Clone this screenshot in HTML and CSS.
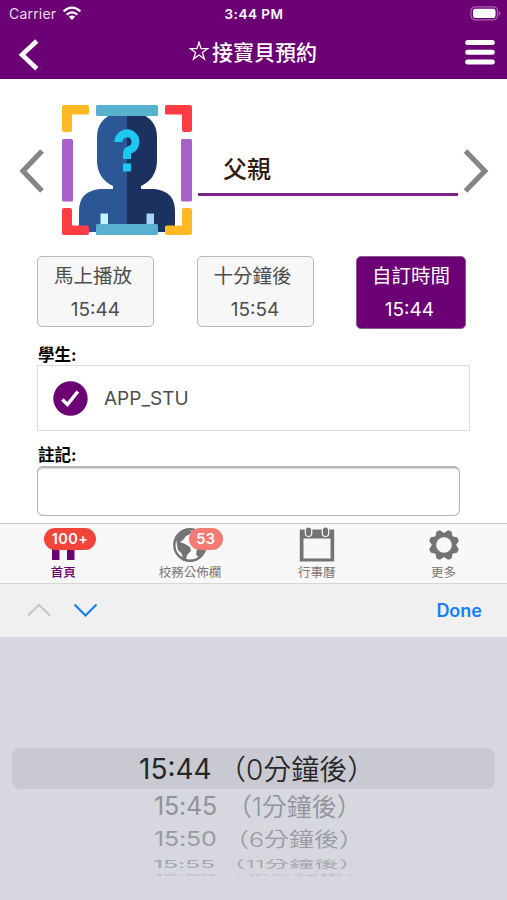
FILE: index.html
```html
<!DOCTYPE html>
<html lang="zh-Hant">
<head>
<meta charset="utf-8">
<title>接寶貝預約</title>
<link rel="stylesheet" href="styles.css">
</head>
<body>
<header class="header">
  <div class="status">
    <div class="carrier"><span>Carrier</span>
      <svg width="20" height="15" viewBox="0 0 20 15"><g fill="none" stroke="#fff" stroke-width="2.3"><path d="M1.6 5.4Q10-2.2 18.4 5.4"/><path d="M4.7 8.7Q10 4 15.3 8.7"/></g><path fill="#fff" d="M6.8 10.8Q10 8.3 13.2 10.8L10 14z"/></svg>
    </div>
    <span class="clock">3:44 PM</span>
    <svg class="battery" width="31" height="15" viewBox="0 0 31 15"><rect x="1" y=".8" width="26.5" height="13" rx="4" fill="none" stroke="#a866ac" stroke-width="1.2"/><rect x="3" y="2.7" width="22.5" height="9.2" rx="2.2" fill="#fff"/><path d="M28.8 5v4.800q1.500-.7 1.500-2.400T28.800 5z" fill="#a866ac"/></svg>
  </div>
  <nav class="nav">
    <svg class="back" width="22" height="32" viewBox="0 0 22 32"><path d="M18.800 2L4 15.800 18.800 29.700" fill="none" stroke="#fff" stroke-width="4.600"/></svg>
    <h1 class="title"><svg width="20" height="20" viewBox="0 0 20 20"><path d="M10 1.200l2.100 6.400h6.700L13.400 11.600l2.100 6.400L10 14l-5.500 4 2.100-6.400L1.200 7.600h6.700z" fill="none" stroke="#fff" stroke-width="1.300"/></svg><span>接寶貝預約</span></h1>
    <svg class="menu" width="30" height="27" viewBox="0 0 30 27"><path d="M2.700 3.500h24.600M2.700 13.300h24.600M2.700 23.100h24.600" stroke="#fff" stroke-width="5" stroke-linecap="round"/></svg>
  </nav>
</header>

<main class="main">
  <section class="person">
    <svg class="arrow" width="26" height="46" viewBox="0 0 26 46"><path d="M24 3L5 23l19 20" fill="none" stroke="#858585" stroke-width="5.200"/></svg>
    <svg class="avatar" width="130" height="130" viewBox="0 0 130 130">
      <path fill="#2b5797" d="M65 10H48Q35 17 35 32V57Q36 74 51 81V84H38Q17 86 17 106V127H65z"/>
      <path fill="#1b3260" d="M65 10H82Q95 17 95 32V57Q94 74 79 81V84H92Q113 86 113 106V127H65z"/>
      <path d="M56.500 37A8.500 8.500 0 1 1 68 44.800Q65 46 65 48.500V54" fill="none" stroke="#1dc8f2" stroke-width="8"/>
      <path fill="#1dc8f2" d="M61 58.500h8v8h-8z"/>
      <path fill="#c5f5fb" d="M38.500 108.500h7.500v13h-7.500z"/><path fill="#a9d5f5" d="M84.500 108.500h7.500v13h-7.500z"/>
      <rect x="34" y="0" width="62" height="11" rx="1.500" fill="#58b2cf"/><rect x="34" y="119" width="62" height="11" rx="1.500" fill="#58b2cf"/>
      <rect x="0" y="34" width="11" height="62.500" rx="1.500" fill="#a861c8"/><rect x="119" y="34" width="11" height="62.500" rx="1.500" fill="#a861c8"/>
      <path fill="#ffb923" d="M2 0H25q2 0 2 2V8q0 1.500-2 1.500H10V25q0 2-2 2H2q-2 0-2-2V2q0-2 2-2z"/>
      <path fill="#fc3d44" d="M128 0H105q-2 0-2 2V8q0 1.500 2 1.500H120V25q0 2 2 2h6q2 0 2-2V2q0-2-2-2z"/>
      <path fill="#fc3d44" d="M2 130H25q2 0 2-2V122q0-1.500-2-1.500H10V105q0-2-2-2H2q-2 0-2 2v23q0 2 2 2z"/>
      <path fill="#ffb923" d="M128 130H105q-2 0-2-2V122q0-1.500 2-1.500H120V105q0-2 2-2h6q2 0 2 2v23q0 2-2 2z"/>
    </svg>
    <div class="name">父親</div>
    <svg class="arrow" width="26" height="46" viewBox="0 0 26 46"><path d="M2.500 3L21.800 23 2.500 43" fill="none" stroke="#858585" stroke-width="5.200"/></svg>
  </section>

  <section class="times">
    <button class="time"><span class="time-label">馬上播放</span><span class="time-value">15:44</span></button>
    <button class="time"><span class="time-label">十分鐘後</span><span class="time-value">15:54</span></button>
    <button class="time time-on"><span class="time-label">自訂時間</span><span class="time-value">15:44</span></button>
  </section>

  <label class="label">學生:</label>
  <div class="student">
    <svg width="35" height="35" viewBox="0 0 35 35"><circle cx="17.500" cy="17.500" r="17.200" fill="#6c0075"/><path d="M9.300 18.500l5.200 5L24.800 10.500" fill="none" stroke="#fff" stroke-width="3.500"/></svg>
    <span>APP_STU</span>
  </div>
  <label class="label label-note">註記:</label>
  <div class="note"></div>
</main>

<nav class="tabs">
  <div class="tab tab-on">
    <svg width="36" height="36" viewBox="0 0 36 36"><path d="M18 4L3 18h4v15h7.500V22h7.500v11h7.500V18h4z" fill="#6c0075"/></svg>
    <span>首頁</span><b class="badge badge-home">100+</b>
  </div>
  <div class="tab">
    <svg width="36" height="36" viewBox="0 0 36 36"><circle cx="18" cy="18" r="15.700" fill="#fafafa" stroke="#737373" stroke-width="2.400"/><path fill="#737373" d="M4 12L9 6l6-3 5 1-2 3-4 2-3 4-3 2 5 2 5 3 1 4-4 4-1 5-3 1-1-7-4-4-1-5zM23 14l6-3 5 4-1 8-6 7-3-2 1-6-3-3z"/></svg>
    <span>校務公佈欄</span><b class="badge badge-news">53</b>
  </div>
  <div class="tab">
    <svg width="36" height="36" viewBox="0 0 36 36"><path fill="#737373" fill-rule="evenodd" d="M.800 2.500H35.200V34.500H.800zM4.500 11.500V31.500H31.500V11.500z"/><g fill="#737373" stroke="#f8f8f8" stroke-width="1.200"><rect x="6.300" y="0" width="6.400" height="9.500" rx="3.200"/><rect x="23.300" y="0" width="6.400" height="9.500" rx="3.200"/></g></svg>
    <span>行事曆</span>
  </div>
  <div class="tab">
    <svg width="36" height="36" viewBox="-18 -18 36 36"><g fill="#737373" stroke="#737373" stroke-width="1.500" stroke-linejoin="round"><path d="M-4.500-10L-1.500-14.500h3L4.500-10z" transform="rotate(22.500)"/><path d="M-4.500-10L-1.500-14.500h3L4.500-10z" transform="rotate(67.500)"/><path d="M-4.500-10L-1.500-14.500h3L4.500-10z" transform="rotate(112.500)"/><path d="M-4.500-10L-1.500-14.500h3L4.500-10z" transform="rotate(157.500)"/><path d="M-4.500-10L-1.500-14.500h3L4.500-10z" transform="rotate(202.500)"/><path d="M-4.500-10L-1.500-14.500h3L4.500-10z" transform="rotate(247.500)"/><path d="M-4.500-10L-1.500-14.500h3L4.500-10z" transform="rotate(292.500)"/><path d="M-4.500-10L-1.500-14.500h3L4.500-10z" transform="rotate(337.500)"/></g><circle r="9.800" fill="#f8f8f8" stroke="#737373" stroke-width="4"/></svg>
    <span>更多</span>
  </div>
</nav>

<div class="accessory">
  <svg width="72" height="16" viewBox="0 0 72 16"><path d="M1 12.500L12 1.800l11 10.700" fill="none" stroke="#c3c3c5" stroke-width="1.800"/><path d="M47.500 1.500l11 11 11-11" fill="none" stroke="#147efb" stroke-width="2.200"/></svg>
  <span class="done">Done</span>
</div>

<section class="picker">
  <div class="row row-now"><span class="t">15:44</span><span class="m"><span class="open">（</span><i>0</i>分鐘後<span class="close">）</span></span></div>
  <div class="row row-1"><span class="t">15:45</span><span class="m"><span class="open">（</span><i>1</i>分鐘後<span class="close">）</span></span></div>
  <div class="row row-2"><span class="t">15:50</span><span class="m"><span class="open">（</span><i>6</i>分鐘後<span class="close">）</span></span></div>
  <div class="row row-3"><span class="t">15:55</span><span class="m"><span class="open">（</span><i>11</i>分鐘後<span class="close">）</span></span></div>
  <div class="row row-4"><span class="t">16:00</span><span class="m"><span class="open">（</span><i>16</i>分鐘後<span class="close">）</span></span></div>
</section>
</body>
</html>
```

FILE: styles.css
```css
* { box-sizing: border-box; }
body {
  margin: 0;
  width: 507px;
  height: 900px;
  overflow: hidden;
  display: flex;
  flex-direction: column;
  background: #fff;
  font-family: Inter, "Noto Sans CJK TC", sans-serif;
  color: #000;
}
svg { display: block; flex: none; }
.header { height: 79px; flex: none; background: #6c0075; color: #fff; }
.status {
  height: 27px;
  display: grid;
  grid-template-columns: 1fr auto 1fr;
  align-items: center;
  padding: 0 6px 0 7px;
}
.carrier { display: flex; align-items: center; gap: 6px; padding-left: 2px; font-size: 14px; letter-spacing: .2px; color: #eadcec; }
.clock { font-size: 13.500px; font-weight: 600; letter-spacing: .5px; }
.battery { justify-self: end; }
.nav { height: 52px; display: flex; align-items: center; justify-content: space-between; padding: 2px 12px 0 18px; }
.back { margin-top: 1px; }
.title { margin: 0; display: flex; align-items: center; gap: 3px; font-size: 21px; line-height: 30px; font-weight: 500; padding-bottom: 3px; padding-left: 1px; }
.title svg { margin-top: -3px; }
.menu { margin-bottom: 3px; }

.main { height: 444px; flex: none; padding: 0 37px; }
.person { height: 177px; margin: 0 -19px; padding-top: 26px; display: flex; align-items: flex-start; }
.arrow { margin-top: 43px; }
.avatar { margin-left: 18px; }
.name {
  width: 260px;
  height: 66px;
  margin: 25px 5px 0 6px;
  padding: 22px 0 0 25px;
  border-bottom: 3px solid #7c2386;
  font-size: 24px;
  line-height: 36px;
  font-weight: 500;
  color: #351a10;
}
.times { display: flex; justify-content: space-between; align-items: flex-start; height: 88px; padding-right: 4px; }
.time {
  width: 117px;
  height: 71px;
  padding: 2px 0 0;
  display: flex;
  flex-direction: column;
  align-items: center;
  border: 1.500px solid #b9b9b9;
  border-radius: 5px;
  background: #f7f7f7;
  color: #4d4d4d;
  font-family: inherit;
}
.time-on { width: 110px; height: 73px; background: #6c0075; border-color: #8a5a8e; color: #fff; }
.time-label { font-size: 19.500px; line-height: 34px; margin-left: -5px; }
.time-on .time-label { margin-left: 0; }
.time-value { font-size: 19px; line-height: 34px; letter-spacing: 0; }
.time-on .time-value { margin-left: -3px; }
.label { display: block; height: 21px; font-size: 16.500px; line-height: 23px; font-weight: 700; padding-left: 1px; }
.student {
  width: 433px;
  height: 66px;
  border: 1px solid #ddd;
  padding-left: 15px;
  display: flex;
  align-items: center;
  gap: 16px;
  font-size: 19px;
  color: #4d4d4d;
}
.label-note { margin-top: 13px; height: 22px; }
.note { width: 423px; height: 50px; border: 1.500px solid #b5b5b5; border-top-width: 2px; border-radius: 6px; box-shadow: inset 0 1px 1px #ddd; }

.tabs { height: 60px; flex: none; display: flex; border-top: 1px solid #c5c5c5; background: #f8f8f8; }
.tab { position: relative; flex: 1; display: flex; flex-direction: column; align-items: center; padding-top: 3px; color: #777; font-size: 12.500px; line-height: 20px; }
.tab-on { color: #6c0075; font-weight: 500; }
.badge {
  position: absolute;
  top: 4px;
  height: 22px;
  border-radius: 11px;
  background: #f1453b;
  color: #fff;
  font-size: 14.500px;
  line-height: 22px;
  font-weight: 600;
  letter-spacing: .4px;
  text-align: center;
}
.badge-home { left: 44px; width: 52px; }
.badge-news { left: 62px; width: 34px; background: #f47b73; }

.accessory {
  height: 54px;
  flex: none;
  display: flex;
  align-items: center;
  justify-content: space-between;
  padding: 0 25px 0 27px;
  border-top: 1px solid #d6d6d8;
  background: #f0f0f1;
}
.done { color: #147efb; font-size: 18px; font-weight: 600; }

.picker { flex: 1; padding: 111px 12px 0; background: #d6d7df; }
.row { display: flex; align-items: center; white-space: nowrap; transform-origin: 50% 50%; color: #92939a; }
.t, .m { line-height: 1; }
.m { font-family: "Noto Sans CJK JP", sans-serif; font-weight: 350; }
.m i { font-family: Inter, sans-serif; font-style: normal; }
.open, .close { display: inline-block; width: 1em; }
.open { text-align: right; }
.row-now { height: 41px; padding-left: 127px; border-radius: 8px; background: #c9cad1; color: #252629; font-size: 28px; }
.row-now .t { width: 79px; }
.row-1, .row-2, .row-3, .row-4 { font-size: 25px; }
.row-1 { height: 35px; padding-left: 142px; }
.row-1 .t { width: 73px; }
.row-2 .t { width: 70px; }
.row-3 .t, .row-4 .t { width: 67px; }
.row-1 .t, .row-2 .t, .row-3 .t, .row-4 .t { letter-spacing: -.2px; }
.row-2 { height: 31px; padding-left: 142px; transform: scaleY(.8); color: #9a9ba2; }
.row-3 { height: 18px; padding-left: 141px; transform: scaleY(.42); color: #a3a4aa; }
.row-3 .m, .row-4 .m { letter-spacing: -.2px; }
.row-4 { height: 5px; padding-left: 141px; transform: scaleY(.09); color: #babbc1; }
```
